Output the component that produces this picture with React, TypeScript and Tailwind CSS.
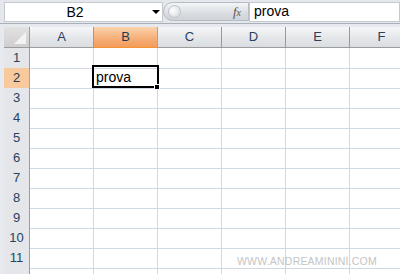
import React from 'react';

const cols = ['A', 'B', 'C', 'D', 'E', 'F'];
const rows = [1, 2, 3, 4, 5, 6, 7, 8, 9, 10, 11, 12];

export default function App() {
  return (
    <div className="relative w-[400px] h-[274px] overflow-hidden bg-[#e6e9ed] font-['Liberation_Sans',Arial,sans-serif]">
      {/* formula bar */}
      <div className="flex items-center h-[24px] pl-[4px] border-b border-[#a9b0b8] bg-[#e4e8ed]">
        <div className="flex items-center w-[159px] h-[20px] bg-white border border-[#c5cad1]">
          <span className="w-[140px] text-center text-[14px] text-black leading-none">B2</span>
          <span className="ml-[7px] w-0 h-0 border-l-[4px] border-r-[4px] border-t-[4px] border-l-transparent border-r-transparent border-t-black" />
        </div>
        <div className="flex items-center w-[86px] h-[19px] rounded-l-full border border-[#b6bcc4] bg-[linear-gradient(#f4f5f7,#d9dde2_60%,#cfd3d8)]">
          <span className="ml-[4px] w-[13px] h-[13px] rounded-full border border-[#bfc4ca] bg-[radial-gradient(circle_at_35%_40%,#ffffff,#d0d4d9)]" />
          <span className="ml-auto mr-[7px] text-[13px] italic text-[#555] font-['Liberation_Serif',serif]">
            f<span className="text-[10px]">x</span>
          </span>
        </div>
        <div className="flex items-center flex-1 h-[20px] bg-white border border-[#c5cad1] pl-[4px] text-[14px] text-black">
          prova
        </div>
      </div>

      <div className="h-[3px]" />

      {/* sheet */}
      <div className="relative pl-[4px]">
        <div className="grid grid-cols-[26px_repeat(6,64px)] h-[21px]">
          <div className="relative border-r border-b border-[#9b9b9b] bg-[linear-gradient(#e2e2e2,#cfcfcf)]">
            <span className="absolute right-[3px] bottom-[3px] w-0 h-0 [border-bottom:12px_solid_#f3f3f3] [border-left:12px_solid_transparent]" />
          </div>
          {cols.map((c) => (
            <div
              key={c}
              className={
                c === 'B'
                  ? 'flex items-center justify-center border-r border-b border-[#f29436] bg-[linear-gradient(#fbd3ae,#f6b07a_55%,#f39c5a)] text-[13px] text-[#1f3a52]'
                  : 'flex items-center justify-center border-r border-b border-[#9b9b9b] bg-[linear-gradient(#f6f7f8,#e4e6e9_55%,#dadde1)] text-[13px] text-[#27415f]'
              }
            >
              {c}
            </div>
          ))}
        </div>
        {rows.map((r) => (
          <div key={r} className="grid grid-cols-[26px_repeat(6,64px)] h-[20px] bg-white">
            <div
              className={
                r === 2
                  ? 'flex items-center justify-center border-r border-b border-r-[#f29436] border-b-[#f2b98a] bg-[#f8c99c] text-[13px] text-[#1f3a52]'
                  : 'flex items-center justify-center border-r border-b border-r-[#9b9b9b] border-b-[#c9cbce] bg-[#e4e6e9] text-[13px] text-[#27415f]'
              }
            >
              {r < 12 ? r : ''}
            </div>
            {cols.map((c) => (
              <div key={c} className="border-r border-b border-[#d0d7e5] text-[14px] leading-[19px] pl-[2px] text-black">
                {r === 2 && c === 'B' ? 'prova' : ''}
              </div>
            ))}
          </div>
        ))}

        {/* active cell B2 */}
        <div className="absolute left-[92px] top-[38px] w-[67px] h-[23px] border-2 border-black" />
        <div className="absolute left-[154px] top-[57px] w-[6px] h-[6px] bg-black border border-white" />
      </div>

      <div className="absolute left-[237px] top-[254px] text-[10.5px] tracking-[0.2px] text-[#c4c4c4]">
        WWW.ANDREAMININI.COM
      </div>
    </div>
  );
}
